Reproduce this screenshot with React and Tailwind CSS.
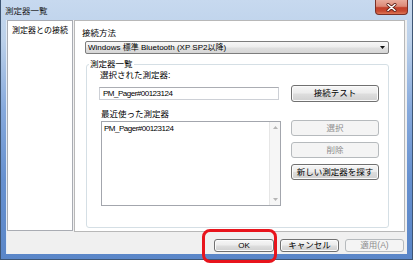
import React from "react";

const btn =
  "flex items-center justify-center rounded-[3px] border border-[#707070] bg-[linear-gradient(180deg,#f6f6f6_0%,#ececec_48%,#dedede_52%,#d0d0d0_100%)] shadow-[inset_0_0_0_1px_#fbfbfb] text-black";
const btnOff =
  "flex items-center justify-center rounded-[3px] border border-[#b6babd] bg-[#f4f4f4] text-[#8d8d8d]";

export default function App() {
  return (
    <div className="relative w-[413px] h-[264px] overflow-hidden bg-white font-['Liberation_Sans','Noto_Sans_CJK_JP',sans-serif] text-[8.5px] leading-none text-black">
      {/* window frame */}
      <div className="w-[413px] h-[260px] flex flex-col border-l border-r border-b border-[#3f5674] bg-[linear-gradient(180deg,#c7d9ef_0px,#bcd1ea_40px,#86a9dc_110px,#6690cf_180px,#5a86c8_260px)]">
        {/* title bar */}
        <div className="h-[20px] flex items-start justify-between">
          <span className="ml-[4px] mt-[7px] text-[8.5px] text-[#1b1b1b]">測定器一覧</span>
          <div className="mr-[4px] w-[33px] h-[15px] rounded-b-[4px] border border-t-0 border-[#7a3026] bg-[linear-gradient(180deg,#e9ab9c_0%,#dc8a78_45%,#c2402b_55%,#c84b32_80%,#de7757_100%)] flex items-center justify-center">
            <svg width="11" height="9" viewBox="0 0 11 9">
              <path d="M2 1.5 L9 7.5 M9 1.5 L2 7.5" stroke="#5a1d14" strokeWidth="3" strokeLinecap="round" />
              <path d="M2 1.5 L9 7.5 M9 1.5 L2 7.5" stroke="#ffffff" strokeWidth="1.6" strokeLinecap="round" />
            </svg>
          </div>
        </div>

        {/* client area */}
        <div className="mx-[5px] mb-[5px] flex-1 bg-[#f0f0f0] border-l border-[#e4ecf6] flex flex-col">
          <div className="flex">
            {/* left list */}
            <div className="w-[66px] h-[211px] bg-white border border-[#a9acb3] pl-[4px] pt-[5px]">
              <span className="text-[8px]">測定器との接続</span>
            </div>

            {/* right page */}
            <div className="ml-[1px] w-[331px] h-[212px] bg-white border border-[#b8b8b8] flex flex-col">
              <span className="ml-[7px] mt-[8px] h-[9px]">接続方法</span>
              <div className="ml-[10px] mt-[3px] w-[304px] h-[13px] rounded-[2px] border border-[#7d7d7d] bg-[linear-gradient(180deg,#f7f7f7_0%,#ededed_48%,#e0e0e0_52%,#d6d6d6_100%)] flex items-center justify-between pl-[2px] pr-[3px]">
                <span className="text-[8px]">Windows 標準 Bluetooth (XP SP2以降)</span>
                <svg width="5" height="3" viewBox="0 0 5 3">
                  <path d="M0 0 H5 L2.5 3 Z" fill="#111" />
                </svg>
              </div>

              {/* group box */}
              <div className="relative ml-[11px] mt-[10px] w-[303px] h-[164px] rounded-[3px] border border-[#d5dfe5] flex">
                <span className="absolute -top-[5px] left-[2px] bg-white px-[1px] text-[8.5px]">測定器一覧</span>

                <div className="ml-[12px] w-[182px] flex flex-col">
                  <span className="ml-[1px] mt-[6px] h-[9px]">選択された測定器:</span>
                  <div className="mt-[7px] w-[180px] h-[13px] border border-[#cdd0d6] border-t-[#abadb3] flex items-center pl-[3px]">
                    <span className="text-[8px] tracking-[-0.5px]">PM_Pager#00123124</span>
                  </div>
                  <span className="ml-[2px] mt-[10px] h-[9px]">最近使った測定器</span>
                  <div className="ml-[2px] mt-[2px] w-[180px] h-[85px] border border-[#a3a6ad] flex">
                    <div className="flex-1 pl-[2px] pt-[2px]">
                      <span className="text-[8px] tracking-[-0.5px]">PM_Pager#00123124</span>
                    </div>
                    <div className="w-[11px] bg-[#f6f6f6] border-l border-[#e6e6e6] flex flex-col items-center justify-between py-[4px]">
                      <svg width="5" height="3" viewBox="0 0 5 3">
                        <path d="M0 3 H5 L2.5 0 Z" fill="#b5b5b5" />
                      </svg>
                      <svg width="5" height="3" viewBox="0 0 5 3">
                        <path d="M0 0 H5 L2.5 3 Z" fill="#b5b5b5" />
                      </svg>
                    </div>
                  </div>
                </div>

                <div className="ml-[10px] flex flex-col">
                  <div className={`${btn} mt-[20px] w-[88px] h-[17px]`}>接続テスト</div>
                  <div className={`${btnOff} mt-[18px] w-[88px] h-[16px]`}>選択</div>
                  <div className={`${btnOff} mt-[6px] w-[88px] h-[16px]`}>削除</div>
                  <div className={`${btn} mt-[6px] w-[88px] h-[16px]`}>新しい測定器を探す</div>
                </div>
              </div>
            </div>
          </div>

          {/* bottom buttons */}
          <div className="mt-[7px] flex justify-end gap-[6px] pr-[3px]">
            <div className={`${btn} w-[60px] h-[13px] border-[#3c7fb1] shadow-[inset_0_0_0_1px_#a8dcf7] text-[8px]`}>OK</div>
            <div className={`${btn} w-[59px] h-[13px]`}>キャンセル</div>
            <div className={`${btnOff} w-[59px] h-[13px]`}>適用(A)</div>
          </div>
        </div>
      </div>

      {/* red highlight */}
      <div className="absolute left-[202px] top-[229px] w-[75px] h-[34px] rounded-[8px] border-[3px] border-[#e8141c]" />
    </div>
  );
}
